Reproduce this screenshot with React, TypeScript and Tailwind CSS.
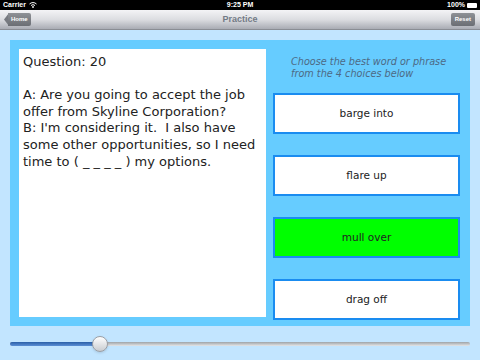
import React from "react";

const choices = [
  { label: "barge into", correct: false },
  { label: "flare up", correct: false },
  { label: "mull over", correct: true },
  { label: "drag off", correct: false },
];

function StatusBar() {
  return (
    <div className="h-[10px] bg-black text-white text-[7px] leading-[10px] font-bold flex items-center justify-between px-[3px] relative" style={{ fontFamily: "'Liberation Sans', sans-serif" }}>
      <div className="flex items-center gap-[3px]">
        <span>Carrier</span>
        <svg width="8" height="6" viewBox="0 0 8 6">
          <path d="M0.5 2 A5 5 0 0 1 7.5 2" stroke="white" strokeWidth="1" fill="none" />
          <path d="M2 3.5 A3 3 0 0 1 6 3.5" stroke="white" strokeWidth="1" fill="none" />
          <circle cx="4" cy="5" r="0.9" fill="white" />
        </svg>
      </div>
      <span className="absolute left-1/2 -translate-x-1/2">9:25 PM</span>
      <div className="flex items-center gap-[2px]">
        <span>100%</span>
        <div className="w-[10px] h-[5px] bg-white rounded-[1px]" />
      </div>
    </div>
  );
}

function NavBar() {
  return (
    <div className="h-[20px] bg-gradient-to-b from-[#f4f4f6] via-[#dcdde1] to-[#a9acb4] border-b border-[#8a8d94] relative flex items-center justify-center" style={{ fontFamily: "'Liberation Sans', sans-serif" }}>
      <div className="absolute left-[4px] top-[3px] h-[13px] flex items-center">
        <svg width="5" height="13" viewBox="0 0 5 13" className="-mr-[1px]">
          <path d="M5 0 L0 6.5 L5 13 Z" fill="#777a80" />
        </svg>
        <div className="h-[13px] px-[3px] bg-gradient-to-b from-[#8e9196] to-[#6b6e74] rounded-r-[2px] text-white text-[6px] font-bold leading-[13px]">Home</div>
      </div>
      <span className="text-[9px] font-bold text-[#737a86]">Practice</span>
      <div className="absolute right-[5px] top-[3px] h-[13px] px-[4px] bg-gradient-to-b from-[#8e9196] to-[#6b6e74] rounded-[2px] text-white text-[6px] font-bold leading-[13px]">Reset</div>
    </div>
  );
}

export default function App() {
  return (
    <div className="w-[480px] h-[360px] bg-[#c2e5ff] flex flex-col overflow-hidden">
      <StatusBar />
      <NavBar />
      <div className="mx-[10px] mt-[10px] h-[286px] bg-[#66ccff] p-[9px] flex gap-[7px]" style={{ fontFamily: "'DejaVu Sans', 'Open Sans', sans-serif" }}>
        <div className="w-[247px] bg-white px-[4px] pt-[5px] text-[13px] leading-[16.6px] text-[#222]">
          <p>Question: 20</p>
          <p className="mt-[16.6px]">
            A: Are you going to accept the job offer from Skyline Corporation?
            <br />
            B: I'm considering it.&nbsp; I also have some other opportunities, so I need time to ( _ _ _ _ ) my options.
          </p>
        </div>
        <div className="flex-1 flex flex-col">
          <p className="pl-[18px] pt-[7px] text-[9.7px] leading-[12px] italic text-[#4d6a85]">
            Choose the best word or phrase
            <br />
            from the 4 choices below
          </p>
          <div className="mt-[13px] flex flex-col gap-[21px] pr-[1px]">
            {choices.map((c) => (
              <div
                key={c.label}
                className={`h-[41px] border-2 border-[#1a8cf0] flex items-center justify-center text-[10.5px] text-[#222] ${c.correct ? "bg-[#00ff00]" : "bg-white"}`}
              >
                {c.label}
              </div>
            ))}
          </div>
        </div>
      </div>
      <div className="mx-[10px] mt-[16px] relative h-[4px]">
        <div className="absolute inset-0 rounded-full bg-gradient-to-b from-[#9ea3a8] to-[#e4e6e8]" />
        <div className="absolute left-0 top-0 h-[4px] w-[91px] rounded-full bg-gradient-to-b from-[#2a5fa8] to-[#5b8fd6]" />
        <div className="absolute left-[82px] top-[-6px] w-[16px] h-[16px] rounded-full border border-[#9a9ea4] bg-gradient-to-b from-[#ffffff] to-[#c9ccd0] shadow-sm" />
      </div>
    </div>
  );
}
